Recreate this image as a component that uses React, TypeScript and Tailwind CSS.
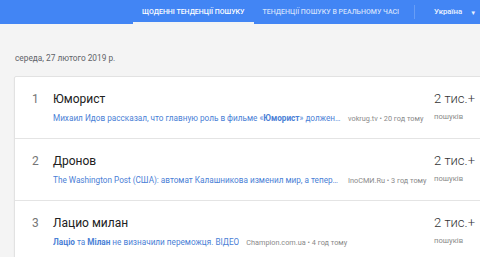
import { ReactNode } from "react"

interface Trend {
  rank: number
  title: string
  snippet: ReactNode
  source: string
  count: string
}

const trends: Trend[] = [
  {
    rank: 1,
    title: "Юморист",
    snippet: (
      <>
        Михаил Идов рассказал, что главную роль в фильме «<b className="font-bold">Юморист</b>» должен был сыграть другой актер
      </>
    ),
    source: "vokrug.tv • 20 год тому",
    count: "2 тис.+",
  },
  {
    rank: 2,
    title: "Дронов",
    snippet: <>The Washington Post (США): автомат Калашникова изменил мир, а теперь он сам меняется</>,
    source: "InoCMИ.Ru • 3 год тому",
    count: "2 тис.+",
  },
  {
    rank: 3,
    title: "Лацио милан",
    snippet: (
      <>
        <b className="font-bold">Лаціо</b> та <b className="font-bold">Мілан</b> не визначили переможця. ВІДЕО
      </>
    ),
    source: "Champion.com.ua • 4 год тому",
    count: "2 тис.+",
  },
]

function Header() {
  return (
    <div className="flex h-[24px] items-stretch whitespace-nowrap bg-[#4285f4] text-[7px] font-medium uppercase text-white">
      <div className="w-[133px] shrink-0" />
      <div className="flex items-center border-b-2 border-[#f1f3f4] px-[9px] pt-[2px]">Щоденні тенденції пошуку</div>
      <div className="flex items-center px-[9px] text-white/75">Тенденції пошуку в реальному часі</div>
      <div className="my-[5px] ml-[6px] w-px bg-white/20" />
      <div className="flex items-center gap-[8px] pl-[19px] normal-case text-[7.8px] text-white/90">
        <span>Україна</span>
        <span className="text-[6px]">▼</span>
      </div>
    </div>
  )
}

function TrendRow({ trend, last }: { trend: Trend; last: boolean }) {
  return (
    <div className={`flex h-[62px] items-start ${last ? "" : "border-b border-[#e4e4e4]"}`}>
      <div className="w-[38px] shrink-0 pl-[17px] pt-[14px] text-[12px] leading-[16px] text-[#757575]">{trend.rank}</div>
      <div className="w-[381px] shrink-0 pt-[14px]">
        <div className="text-[12px] leading-[16px] text-[#212121]">{trend.title}</div>
        <div className="mt-[5px] flex items-baseline leading-[12px]">
          <span className="max-w-[288px] truncate text-[8.2px] text-[#4a80d6]">{trend.snippet}</span>
          <span className="ml-[7px] shrink-0 whitespace-nowrap text-[7.3px] text-[#8a8a8a]">{trend.source}</span>
        </div>
      </div>
      <div className="pt-[13px]">
        <div className="text-[13px] leading-[18px] font-light text-[#333]">{trend.count}</div>
        <div className="mt-[3px] text-[7.7px] leading-[12px] text-[#8a8a8a]">пошуків</div>
      </div>
    </div>
  )
}

export default function App() {
  return (
    <div className="h-[257px] w-[480px] overflow-hidden bg-[#f4f4f4]" style={{ fontFamily: "Roboto, 'Noto Sans', sans-serif" }}>
      <Header />
      <div className="pl-[15px] pt-[28px] text-[8.3px] leading-[12px] text-[#5f6368]">середа, 27 лютого 2019 р.</div>
      <div className="ml-[14px] mt-[12px] w-[520px] rounded-[2px] border border-[#e2e2e2] bg-white shadow-[0_1px_2px_rgba(0,0,0,0.06)]">
        {trends.map((t, i) => (
          <TrendRow key={t.rank} trend={t} last={i === trends.length - 1} />
        ))}
      </div>
    </div>
  )
}
